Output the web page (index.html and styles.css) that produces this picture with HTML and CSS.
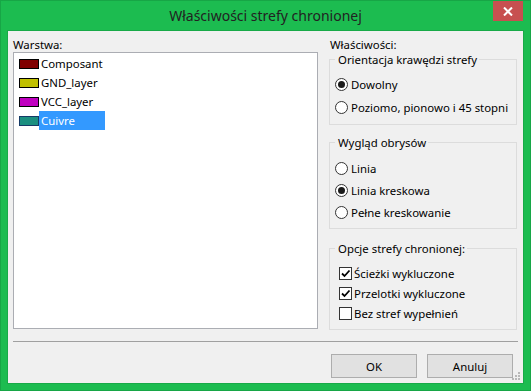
FILE: index.html
```html
<!DOCTYPE html>
<html lang="pl">
<head>
<meta charset="utf-8">
<title>Właściwości strefy chronionej</title>
<link rel="stylesheet" href="styles.css">
</head>
<body>
<div class="window">
  <div class="titlebar">
    <div class="title">Właściwości strefy chronionej</div>
    <div class="close">
      <svg width="10" height="9" viewBox="0 0 10 9"><path d="M1 0.5 L9 8.5 M9 0.5 L1 8.5" stroke="#fff" stroke-width="2" fill="none"/></svg>
    </div>
  </div>
  <div class="client">
    <div class="main">
      <div class="left">
        <div class="label">Warstwa:</div>
        <div class="list">
          <div class="item"><span class="swatch sw-composant"></span><span class="name">Composant</span></div>
          <div class="item"><span class="swatch sw-gnd"></span><span class="name">GND_layer</span></div>
          <div class="item"><span class="swatch sw-vcc"></span><span class="name">VCC_layer</span></div>
          <div class="item selected"><span class="swatch sw-cuivre"></span><span class="name">Cuivre</span></div>
        </div>
      </div>
      <div class="right">
        <div class="label label-right">Właściwości:</div>
        <fieldset class="group g1">
          <legend>Orientacja krawędzi strefy</legend>
          <div class="opt"><span class="radio on"></span><span>Dowolny</span></div>
          <div class="opt"><span class="radio"></span><span>Poziomo, pionowo i 45 stopni</span></div>
        </fieldset>
        <fieldset class="group g2">
          <legend>Wygląd obrysów</legend>
          <div class="opt"><span class="radio"></span><span>Linia</span></div>
          <div class="opt"><span class="radio on"></span><span>Linia kreskowa</span></div>
          <div class="opt"><span class="radio"></span><span>Pełne kreskowanie</span></div>
        </fieldset>
        <fieldset class="group g3">
          <legend>Opcje strefy chronionej:</legend>
          <div class="chk"><span class="box"><svg width="11" height="11" viewBox="0 0 11 11"><path d="M2 5.5 L4.5 8 L9.5 2.5" stroke="#000" stroke-width="1.8" fill="none"/></svg></span><span>Ścieżki wykluczone</span></div>
          <div class="chk"><span class="box"><svg width="11" height="11" viewBox="0 0 11 11"><path d="M2 5.5 L4.5 8 L9.5 2.5" stroke="#000" stroke-width="1.8" fill="none"/></svg></span><span>Przelotki wykluczone</span></div>
          <div class="chk"><span class="box"></span><span>Bez stref wypełnień</span></div>
        </fieldset>
      </div>
    </div>
    <div class="sep"></div>
    <div class="buttons">
      <button class="btn">OK</button>
      <button class="btn">Anuluj</button>
    </div>
    <svg class="grip" width="12" height="12" viewBox="0 0 12 12">
      <rect x="8" y="2" width="2" height="2" fill="#b8b8b8"/>
      <rect x="5" y="5" width="2" height="2" fill="#b8b8b8"/>
      <rect x="8" y="5" width="2" height="2" fill="#b8b8b8"/>
      <rect x="2" y="8" width="2" height="2" fill="#b8b8b8"/>
      <rect x="5" y="8" width="2" height="2" fill="#b8b8b8"/>
      <rect x="8" y="8" width="2" height="2" fill="#b8b8b8"/>
    </svg>
  </div>
</div>
</body>
</html>
```
FILE: styles.css
```css
body {
  margin: 0;
}
.window {
  width: 531px;
  height: 391px;
  box-sizing: border-box;
  background: #1cbc50;
  border: 1px solid #17a646;
  display: flex;
  flex-direction: column;
  font-family: "Noto Sans", "Open Sans", sans-serif;
}
.titlebar {
  height: 30px;
  display: grid;
  grid-template-columns: 1fr auto 1fr;
}
.title {
  grid-column: 2;
  font-size: 14px;
  line-height: 29px;
  color: #222;
  white-space: nowrap;
}
.close {
  grid-column: 3;
  justify-self: end;
  align-self: start;
  width: 30px;
  height: 20px;
  margin-right: 7px;
  background: #c75050;
  display: flex;
  align-items: center;
  justify-content: center;
}
.client {
  flex: 1;
  margin: 0 7px 7px;
  background: #f0f0f0;
  position: relative;
  display: flex;
  flex-direction: column;
  font-size: 11.4px;
  color: #000;
  box-shadow: 0 0 0 1px #18aa48;
}
.main {
  display: flex;
  gap: 11px;
  padding: 0 6px 0 5px;
}
.left {
  width: 305px;
  padding-top: 6px;
}
.label {
  line-height: 15px;
  height: 15px;
}
.label-right {
  padding-left: 1px;
  padding-top: 6px;
}
.list {
  height: 277px;
  box-sizing: border-box;
  border: 1px solid #abadb3;
  background: #fff;
  padding: 1px 0 0 5px;
}
.item {
  height: 19px;
  display: flex;
  align-items: center;
}
.swatch {
  width: 20px;
  height: 10px;
  box-sizing: border-box;
  border: 1px solid #000;
}
.sw-composant { background: #800000; }
.sw-gnd { background: #c0c000; }
.sw-vcc { background: #c000c0; }
.sw-cuivre { background: #1b8f80; border-color: #163a66; }
.name {
  padding: 0 2px;
  line-height: 19px;
}
.selected .name {
  width: 66px;
  box-sizing: border-box;
  background: #3399ff;
  color: #fff;
}
.right {
  width: 188px;
  display: flex;
  flex-direction: column;
}
.group {
  margin: 0;
  border: 1px solid #dcdcdc;
  padding: 0 5px;
  min-width: 0;
}
.group legend {
  padding: 0 2px 0 3px;
  line-height: 13px;
}
.g1 { margin-top: 1px; padding-top: 7px; padding-bottom: 5px; }
.g2 { margin-top: 11px; padding-top: 8px; padding-bottom: 5px; }
.g3 { margin-top: 13px; padding-top: 8px; padding-bottom: 6px; }
.opt {
  display: flex;
  align-items: center;
  gap: 3px;
  white-space: nowrap;
}
.g1 .opt { height: 23px; }
.g2 .opt { height: 22px; }
.radio {
  width: 13px;
  height: 13px;
  box-sizing: border-box;
  border: 1px solid #333;
  border-radius: 50%;
  background: #fff;
  display: flex;
  align-items: center;
  justify-content: center;
  flex: none;
}
.radio.on::after {
  content: "";
  width: 7px;
  height: 7px;
  border-radius: 50%;
  background: #1a1a1a;
}
.chk {
  height: 20px;
  display: flex;
  align-items: center;
  gap: 2px;
  padding-left: 4px;
  white-space: nowrap;
}
.box {
  width: 13px;
  height: 13px;
  box-sizing: border-box;
  border: 1px solid #333;
  background: #fff;
  display: flex;
  align-items: center;
  justify-content: center;
  flex: none;
}
.sep {
  margin: 11px 5px 0 5px;
  height: 1px;
  background: #a0a0a0;
  width: 505px;
}
.buttons {
  display: flex;
  justify-content: flex-end;
  gap: 10px;
  padding: 12px 10px 0 0;
}
.btn {
  width: 86px;
  height: 24px;
  margin: 0;
  border: 1px solid #adadad;
  background: #e1e1e1;
  font-family: "Noto Sans", "Open Sans", sans-serif;
  font-size: 11.4px;
  color: #000;
  padding: 0;
}
.grip {
  position: absolute;
  right: 1px;
  bottom: 1px;
}
```
